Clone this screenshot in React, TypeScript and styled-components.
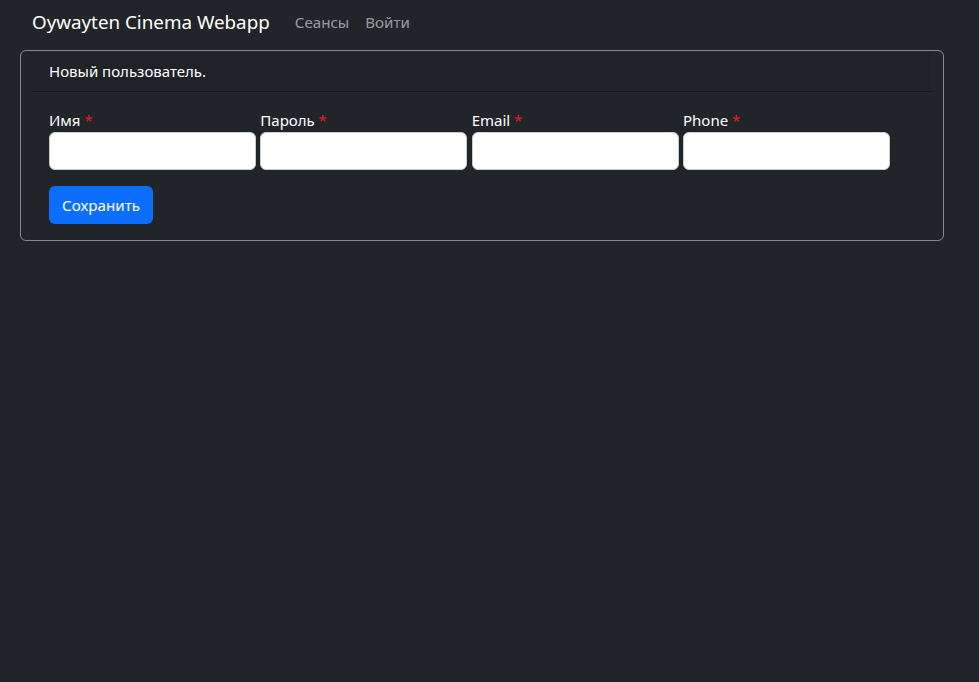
import React from "react";
import styled, { createGlobalStyle } from "styled-components";

const Global = createGlobalStyle`
  html, body { margin: 0; padding: 0; background: #212529; }
  body {
    font-family: "Noto Sans", "Liberation Sans", sans-serif;
    font-size: 16px;
    line-height: 1.5;
    color: #dee2e6;
    min-height: 682px;
  }
  * { box-sizing: border-box; }
`;

const Page = styled.div`
  padding: 0 35px 0 20px;
`;

const Navbar = styled.nav`
  display: flex;
  align-items: center;
  height: 44px;
  padding: 0 12px;
  margin-bottom: 6px;
`;

const Brand = styled.a`
  font-size: 18.8px;
  color: #fff;
  text-decoration: none;
  margin-right: 17px;
  line-height: 30px;
`;

const NavLink = styled.a`
  color: rgba(255, 255, 255, 0.55);
  text-decoration: none;
  padding: 0 8px;
  font-size: 15.1px;
`;

const Card = styled.section`
  border: 1px solid #85888c;
  border-radius: 6px;
  padding: 0 12px 16px 11px;
`;

const CardHeader = styled.div`
  padding: 8px 17px;
  background: rgba(0, 0, 0, 0.04);
  border-bottom: 1px solid rgba(0, 0, 0, 0.3);
  color: #fff;
  font-size: 15px;
  line-height: 24px;
`;

const Form = styled.form`
  padding: 16px 17px 0;
`;

const Row = styled.div`
  display: flex;
  gap: 4.33px;
`;

const Field = styled.div`
  display: flex;
  flex-direction: column;
  width: 207px;
`;

const Label = styled.label`
  color: #fff;
  font-size: 15px;
  line-height: 24px;
`;

const Req = styled.span`
  color: #dc1e28;
`;

const Input = styled.input`
  height: 38px;
  width: 100%;
  border: 1px solid #c9cdd1;
  border-radius: 6px;
  background: #fff;
  padding: 6px 12px;
  font: inherit;
`;

const Button = styled.button`
  margin-top: 16px;
  height: 38px;
  padding: 0 13px;
  border: none;
  border-radius: 6px;
  background: #0d6efd;
  color: #fff;
  font-family: inherit;
  font-size: 15.2px;
  cursor: pointer;
`;

const fields = ["Имя", "Пароль", "Email", "Phone"];

export default function App() {
  return (
    <Page>
      <Global />
      <Navbar>
        <Brand href="#">Oywayten Cinema Webapp</Brand>
        <NavLink href="#">Сеансы</NavLink>
        <NavLink href="#">Войти</NavLink>
      </Navbar>
      <Card>
        <CardHeader>Новый пользователь.</CardHeader>
        <Form onSubmit={(e) => e.preventDefault()}>
          <Row>
            {fields.map((f) => (
              <Field key={f}>
                <Label>
                  {f} <Req>*</Req>
                </Label>
                <Input type={f === "Пароль" ? "password" : "text"} />
              </Field>
            ))}
          </Row>
          <Button type="submit">Сохранить</Button>
        </Form>
      </Card>
    </Page>
  );
}
